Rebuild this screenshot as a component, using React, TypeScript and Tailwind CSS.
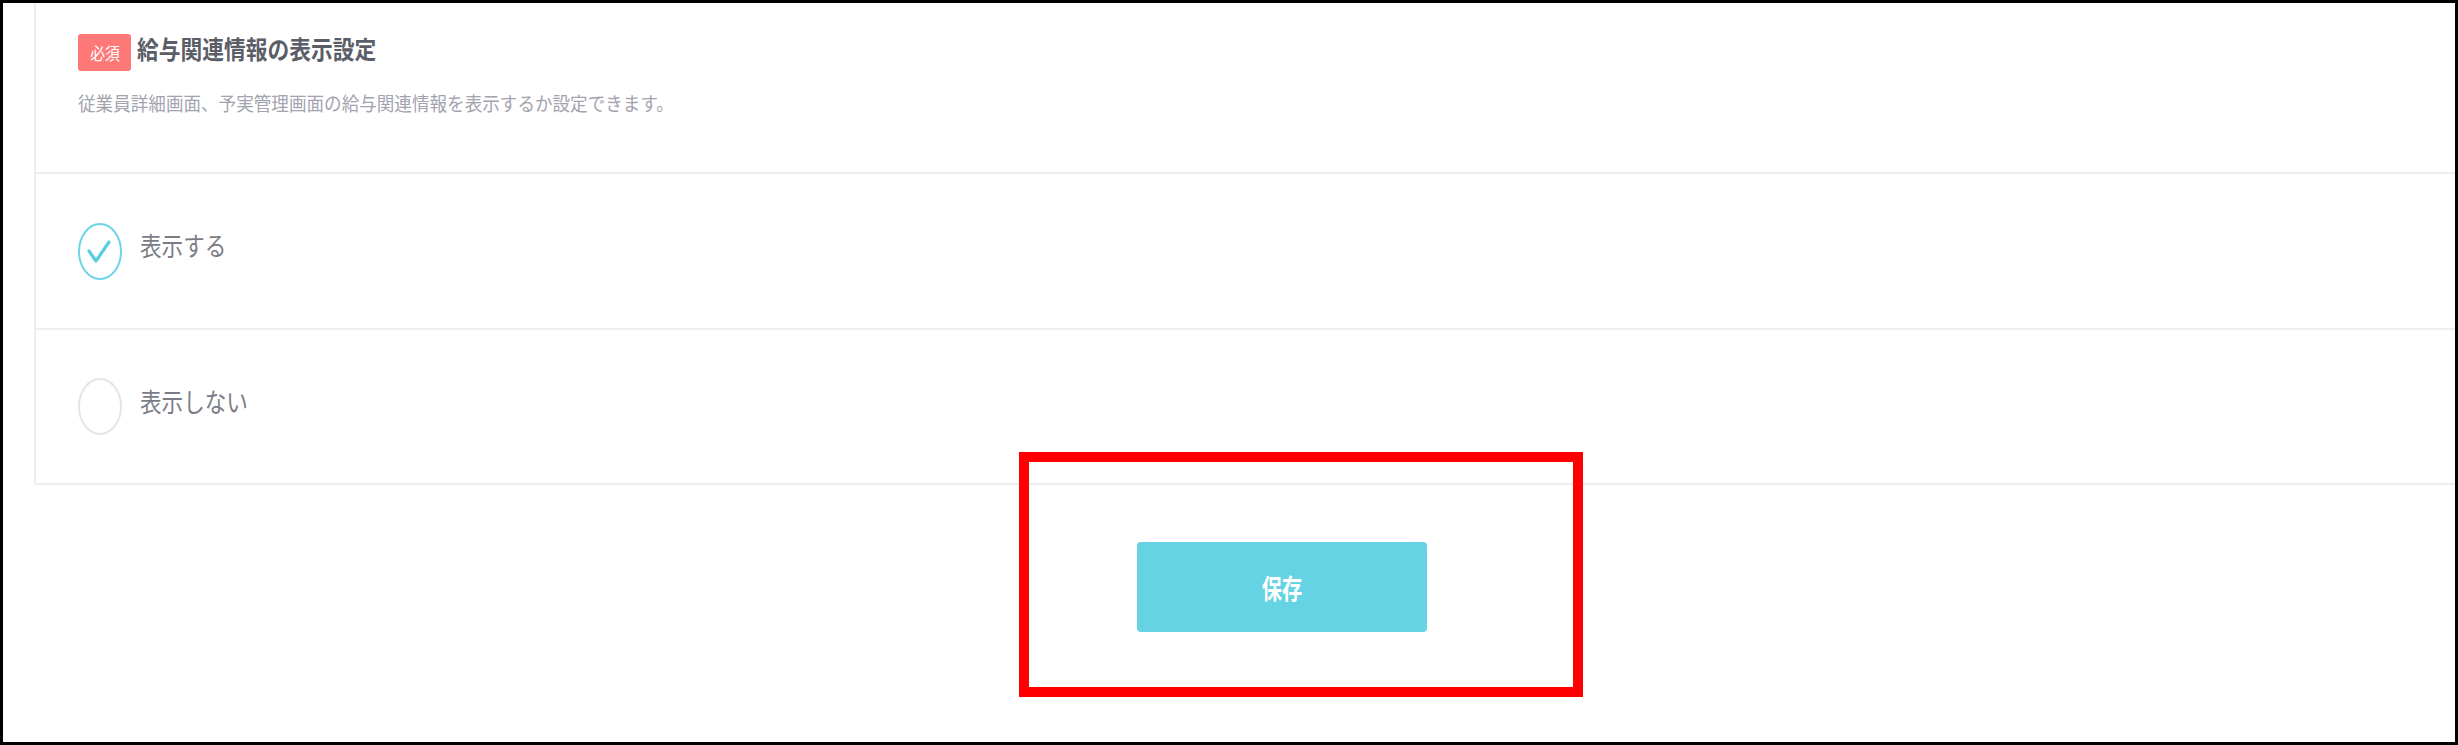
import React from "react";

const jp = { fontFamily: '"Noto Sans CJK JP", "Noto Sans", sans-serif' };

function Radio({ checked }: { checked: boolean }) {
  return (
    <svg width="44" height="57" viewBox="0 0 44 57" className="shrink-0">
      <ellipse
        cx="22"
        cy="28.5"
        rx="21"
        ry="27.5"
        fill="white"
        stroke={checked ? "#6dd5e6" : "#e2e5ea"}
        strokeWidth="2"
      />
      {checked && (
        <polyline
          points="11,28 18,38 31,19"
          fill="none"
          stroke="#5acde0"
          strokeWidth="3.2"
          strokeLinecap="round"
          strokeLinejoin="round"
        />
      )}
    </svg>
  );
}

function Option({ checked, label, shift }: { checked: boolean; label: string; shift: string }) {
  return (
    <div className={`flex items-center pl-[42px] border-b-2 border-[#eeeeee] ${checked ? "h-[156px]" : "h-[155px]"}`}>
      <Radio checked={checked} />
      <span
        className={`ml-[18px] inline-block origin-left scale-x-[0.83] text-[26px] leading-none text-[#7b7d86] whitespace-nowrap ${shift}`}
        style={jp}
      >
        {label}
      </span>
    </div>
  );
}

export default function App() {
  return (
    <div className="relative w-[2458px] h-[745px] bg-white border-[3px] border-black overflow-hidden" style={jp}>
      <div className="ml-[31px] border-l-2 border-[#eeeeee] flex flex-col">
        <div className="h-[171px] border-b-2 border-[#eeeeee] pl-[42px] pt-[31px]">
          <div className="flex items-start">
            <div className="w-[53px] h-[37px] rounded-[3px] bg-[#ff7878] flex items-center justify-center">
              <span className="inline-block scale-x-[0.87] text-[17px] leading-none text-white">必須</span>
            </div>
            <span className="ml-[6px] mt-[2px] inline-block origin-left scale-x-[0.87] text-[25px] leading-none font-bold text-[#5b5e67] whitespace-nowrap">
              給与関連情報の表示設定
            </span>
          </div>
          <div className="mt-[21px]">
            <span className="inline-block origin-left scale-x-[0.925] text-[19px] leading-none text-[#a2a3ae] whitespace-nowrap">
              従業員詳細画面、予実管理画面の給与関連情報を表示するか設定できます。
            </span>
          </div>
        </div>
        <Option checked={true} label="表示する" shift="mb-[13px]" />
        <Option checked={false} label="表示しない" shift="mb-[12px]" />
      </div>
      <div className="mt-[57px] ml-[1134px]">
        <button className="w-[290px] h-[90px] rounded-[4px] bg-[#66d3e4] flex items-center justify-center">
          <span className="inline-block scale-x-[0.75] text-[27px] leading-none font-bold text-white">保存</span>
        </button>
      </div>
      <div className="absolute left-[1016px] top-[449px] w-[564px] h-[245px] border-[10px] border-[#ff0000] pointer-events-none" />
    </div>
  );
}
